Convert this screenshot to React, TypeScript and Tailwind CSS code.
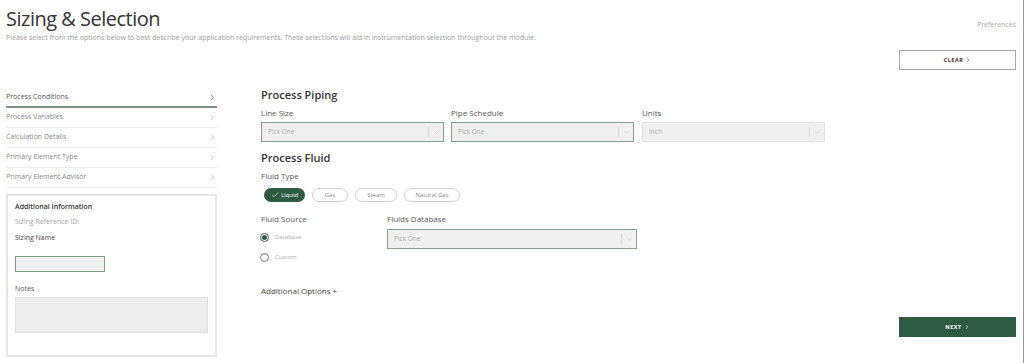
import React from 'react';
import { ChevronRight, ChevronDown, Check } from 'lucide-react';

const font = { fontFamily: '"Open Sans", "Noto Sans", sans-serif' };

const navItems = [
  'Process Conditions',
  'Process Variables',
  'Calculation Details',
  'Primary Element Type',
  'Primary Element Advisor',
];

const Select: React.FC<{ value: string; active?: boolean; width: string }> = ({ value, active, width }) => (
  <div
    className={`h-[20px] ${width} flex items-center bg-[#f0f0f0] border ${
      active ? 'border-[#86a08e]' : 'border-[#dcdcdc]'
    }`}
  >
    <span className="flex-1 pl-[6px] text-[6.5px] text-[#aaa]">{value}</span>
    <span className="h-[10px] w-px bg-[#d6d6d6]" />
    <span className="w-[14px] flex justify-center">
      <ChevronDown className="w-[7px] h-[7px] text-[#b5b5b5]" strokeWidth={1.5} />
    </span>
  </div>
);

const Pill: React.FC<{ label: string; width: string; active?: boolean }> = ({ label, width, active }) =>
  active ? (
    <div className={`h-[14px] ${width} rounded-full bg-[#2f5b42] flex items-center justify-center gap-[2px] text-white text-[6px]`}>
      <Check className="w-[8px] h-[8px]" strokeWidth={2} />
      {label}
    </div>
  ) : (
    <div className={`h-[14px] ${width} rounded-full border border-[#cfcfcf] flex items-center justify-center text-[6px] text-[#888]`}>
      {label}
    </div>
  );

const App: React.FC = () => {
  return (
    <div className="w-[1024px] h-[363px] bg-white border-r border-[#9a9a9a] overflow-hidden" style={font}>
      {/* Header */}
      <div className="flex justify-between pl-[6px] pr-[7px]">
        <div>
          <h1 className="pt-[5px] text-[20px] leading-[28px] tracking-[-0.5px] text-[#333] font-normal">Sizing &amp; Selection</h1>
          <p className="text-[7px] leading-[10px] text-[#9a9a9a]">
            Please select from the options below to best describe your application requirements. These selections will aid in
            instrumentation selection throughout the module.
          </p>
        </div>
        <div className="pt-[20px] text-[7px] leading-[10px] text-[#aaa]">Preferences</div>
      </div>

      <div className="flex justify-end pr-[7px] mt-[7px]">
        <button className="w-[117px] h-[20px] border border-[#a8a8a8] flex items-center justify-center gap-[2px] text-[5.5px] font-bold tracking-[0.5px] text-[#333]">
          CLEAR
          <ChevronRight className="w-[6px] h-[6px]" strokeWidth={2.5} />
        </button>
      </div>

      {/* Body */}
      <div className="flex">
        {/* Left column */}
        <div className="ml-[6px] w-[211px] mt-[18px]">
          {navItems.map((item, i) => (
            <div
              key={item}
              className={`h-[20px] flex items-center justify-between ${
                i === 0 ? 'border-b-2 border-[#7e9186] text-[#555]' : 'border-b border-[#ececec] text-[#888]'
              }`}
            >
              <span className="text-[7px]">{item}</span>
              <ChevronRight className="w-[9px] h-[9px]" strokeWidth={i === 0 ? 2 : 1.2} />
            </div>
          ))}

          <div className="mt-[6px] h-[163px] border-2 border-[#e6e6e6] pl-[7px] pt-[6px]">
            <div className="text-[7px] leading-[10px] font-semibold text-[#333]">Additional Information</div>
            <div className="mt-[5px] text-[7px] leading-[10px] text-[#a0a0a0]">Sizing Reference ID:</div>
            <div className="mt-[6px] text-[7px] leading-[10px] text-[#444]">Sizing Name</div>
            <div className="mt-[13px] w-[90px] h-[16px] border border-[#7f9686] bg-[#f0f0f0]" />
            <div className="mt-[12px] text-[7px] leading-[10px] text-[#555]">Notes</div>
            <div className="mt-[3px] w-[193px] h-[36px] border border-[#dedede] bg-[#ececec]" />
          </div>
        </div>

        {/* Main */}
        <div className="flex-1 ml-[44px] pr-[7px]">
          <h2 className="mt-[18px] text-[11px] leading-[14px] font-semibold text-[#333]">Process Piping</h2>
          <div className="flex gap-[7px] mt-[6px]">
            <div>
              <div className="text-[8px] leading-[10px] text-[#555]">Line Size</div>
              <div className="mt-[4px]">
                <Select value="Pick One" active width="w-[183px]" />
              </div>
            </div>
            <div>
              <div className="text-[8px] leading-[10px] text-[#555]">Pipe Schedule</div>
              <div className="mt-[4px]">
                <Select value="Pick One" active width="w-[183px]" />
              </div>
            </div>
            <div className="ml-[1px]">
              <div className="text-[8px] leading-[10px] text-[#555]">Units</div>
              <div className="mt-[4px]">
                <Select value="Inch" width="w-[183px]" />
              </div>
            </div>
          </div>

          <h2 className="mt-[9px] text-[11px] leading-[14px] font-semibold text-[#333]">Process Fluid</h2>
          <div className="mt-[6px] text-[8px] leading-[10px] text-[#555]">Fluid Type</div>
          <div className="mt-[7px] ml-[3px] flex gap-[7px]">
            <Pill label="Liquid" width="w-[41px]" active />
            <Pill label="Gas" width="w-[36px]" />
            <Pill label="Steam" width="w-[42px]" />
            <Pill label="Natural Gas" width="w-[56px]" />
          </div>

          <div className="flex mt-[12px]">
            <div className="w-[126px]">
              <div className="text-[8px] leading-[10px] text-[#555]">Fluid Source</div>
              <div className="mt-[9px] flex items-center gap-[6px] -ml-[1px]">
                <span className="w-[9px] h-[9px] rounded-full border border-[#555] flex items-center justify-center">
                  <span className="w-[5px] h-[5px] rounded-full bg-[#2f5b42]" />
                </span>
                <span className="text-[6px] text-[#aaa]">Database</span>
              </div>
              <div className="mt-[11px] flex items-center gap-[6px] -ml-[1px]">
                <span className="w-[9px] h-[9px] rounded-full border border-[#777]" />
                <span className="text-[6px] text-[#aaa]">Custom</span>
              </div>
            </div>
            <div>
              <div className="text-[8px] leading-[10px] text-[#555]">Fluids Database</div>
              <div className="mt-[5px]">
                <Select value="Pick One" active width="w-[250px]" />
              </div>
            </div>
          </div>

          <div className="mt-[24px] text-[8px] leading-[10px] text-[#444]">Additional Options +</div>

          <div className="flex justify-end mt-[21px]">
            <button className="w-[117px] h-[20px] bg-[#2f5b42] flex items-center justify-center gap-[2px] text-[5.5px] font-bold tracking-[0.5px] text-white">
              NEXT
              <ChevronRight className="w-[6px] h-[6px]" strokeWidth={2.5} />
            </button>
          </div>
        </div>
      </div>
    </div>
  );
};

export default App;
